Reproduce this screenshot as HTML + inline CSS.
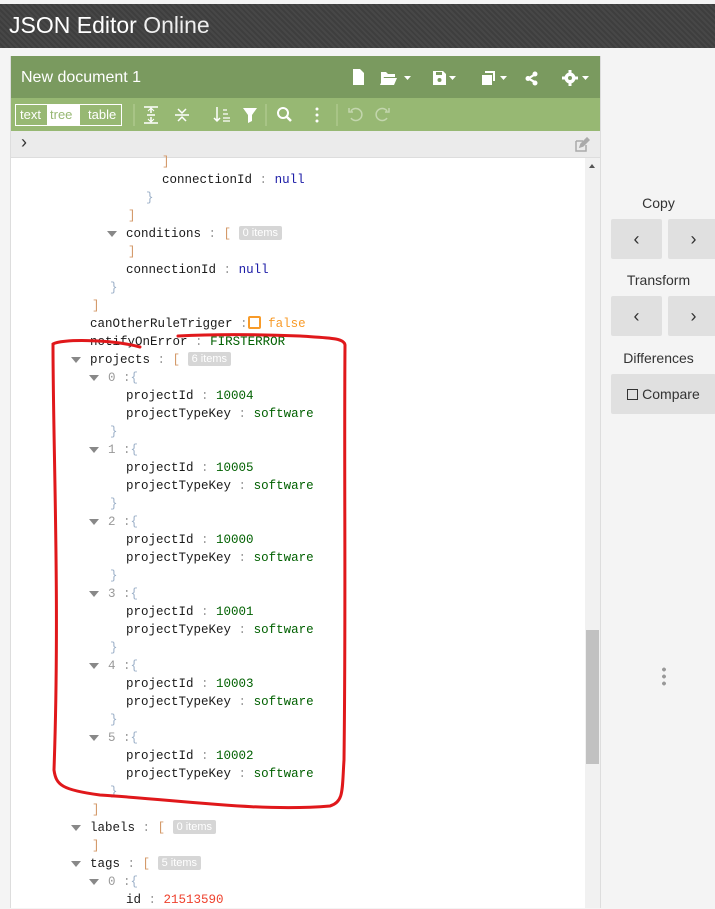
<!DOCTYPE html>
<html><head><meta charset="utf-8"><style>
*{margin:0;padding:0;box-sizing:border-box}
body{width:715px;height:908px;overflow:hidden;background:#f4f4f4;font-family:"Liberation Sans",sans-serif;position:relative}
#hdr{position:absolute;left:0;top:4px;width:715px;height:44px;background:repeating-linear-gradient(45deg,#474747 0 2px,#3e3e3e 2px 4px)}
#hdr span{position:absolute;left:9px;top:8px;font-size:23px;color:#fff}
#panel{position:absolute;left:10px;top:56px;width:589px;height:852px;background:#fff;border-left:1px solid #ddd}
#title{position:absolute;left:0;top:0;width:589px;height:42px;background:#7a9a5f;color:#fff;font-size:16px;padding:13px 10px}
#tb{position:absolute;left:0;top:42px;width:589px;height:33px;background:#97b873}
#nav{position:absolute;left:0;top:75px;width:589px;height:27px;background:#ebebeb;border-bottom:1px solid #ddd}
.r{position:absolute;font-family:"Liberation Mono",monospace;font-size:12.5px;color:#1a1a1a;white-space:pre;line-height:18px;height:18px;margin-top:1px}
.g{color:#999}.b{color:#9cb0c8}.o{color:#d49a6a}.n{color:#1a1aa6}.s{color:#006000}.num{color:#ee422e}
.idx{color:#999}
.badge{display:inline-block;background:#d6d6d6;color:#fff;font-family:"Liberation Sans",sans-serif;font-size:11px;line-height:14px;padding:0 4px;border-radius:2px;vertical-align:1px}
.tri{position:absolute;width:0;height:0;border-left:5px solid transparent;border-right:5px solid transparent;border-top:6px solid #888;margin-top:1px}
#side{position:absolute;left:600px;top:56px;width:115px;height:852px;background:#f4f4f4;border-left:1px solid #ddd}
.lbl{position:absolute;width:115px;text-align:center;font-size:14px;color:#333;left:0}
.btn{position:absolute;background:#e0e0e0;width:51px;height:40px;border-radius:2px;text-align:center;line-height:40px;font-size:18px;color:#333}
</style></head><body>
<div id="hdr"><span>JSON Editor <span style="position:static;font-weight:300;color:#eee">Online</span></span></div>
<div id="panel">
<div id="title">New document 1
<svg style="position:absolute;left:340px;top:12px" width="245" height="20" fill="#fff">
<path d="M2 1h7l4 4v12H2z"/>
<path d="M30 4h5l2 2h7v3h-11l-3 7z M32 10h14l-3 7H29z"/><path d="M53 8h7l-3.5 4z"/>
<path d="M82 3h10l3 3v11H82z" /><rect x="85" y="4" width="6" height="3" fill="#7a9a5f"/><circle cx="88.5" cy="12" r="2" fill="#7a9a5f"/><path d="M98 8h7l-3.5 4z"/>
<path d="M131 7h10v10h-10z M134 3h10v10h-2V5h-8z"/><path d="M149 8h7l-3.5 4z"/>
<circle cx="184" cy="6" r="2.5"/><circle cx="184" cy="15" r="2.5"/><circle cx="177" cy="10.5" r="2.5"/><path d="M177 10l7-4.5v1.5l-7 4.5z M177 11l7 4v-1.5l-7-4z" stroke="#fff"/>
<circle cx="219" cy="10" r="5.5"/><circle cx="219" cy="10" r="2" fill="#7a9a5f"/><path d="M217.5 2h3v3h-3zM217.5 15h3v3h-3zM211 8.5h3v3h-3zM224 8.5h3v3h-3z"/><path d="M231 8h7l-3.5 4z"/>
</svg></div>
<div id="tb">
<div style="position:absolute;left:4px;top:6px;width:107px;height:22px;border:1px solid #fff;font-size:13px;color:#fff;line-height:20px">
<span style="position:absolute;left:4px">text</span><span style="position:absolute;left:31px;width:33px;height:20px;background:#fff;color:#97b873;padding-left:3px">tree</span><span style="position:absolute;left:72px">table</span></div>
<svg style="position:absolute;left:120px;top:4px" width="280" height="26" stroke="#fff" fill="#fff">
<path d="M3 2v22M135 2v22M206 2v22" stroke="#b8d09a"/>
<path d="M13 5h14M13 21h14M16 13h8M20 7v4M20 15v4" stroke-width="1.5"/><path d="M17 9l3-3 3 3M17 17l3 3 3-3" fill="none"/>
<path d="M44 13h14M47 7l4 4 4-4M47 19l4-4 4 4" fill="none" stroke-width="1.5"/>
<path d="M86 5v14M83 16l3 3 3-3" fill="none" stroke-width="1.5"/><path d="M92 8h4M92 12h5M92 16h7M92 19h7" stroke-width="1.2"/>
<path d="M112 6h14l-5 7v6l-4 2v-8z" stroke="none"/>
<circle cx="152" cy="11" r="5" fill="none" stroke-width="2"/><path d="M156 15l4 4" stroke-width="2.5"/>
<circle cx="186" cy="7" r="1.5" stroke="none"/><circle cx="186" cy="13" r="1.5" stroke="none"/><circle cx="186" cy="19" r="1.5" stroke="none"/>
<path d="M220 9a6 6 0 1 1 0 7M218 6v4h4" fill="none" stroke="#c3d6ae" stroke-width="1.5"/>
<path d="M256 9a6 6 0 1 0 0 7M258 6v4h-4" fill="none" stroke="#c3d6ae" stroke-width="1.5"/>
</svg></div>
<div id="nav"><span style="position:absolute;left:10px;top:1px;font-size:18px;color:#333">›</span>
<svg style="position:absolute;left:563px;top:6px" width="16" height="16" fill="none" stroke="#aaa" stroke-width="1.5"><path d="M2 4h7M2 4v10h10V8"/><path d="M6 10l1-3 6-6 2 2-6 6z" fill="#aaa"/></svg></div>
<div style="position:absolute;left:574px;top:102px;width:15px;height:750px;background:#f1f1f1"></div>
<div style="position:absolute;left:575px;top:574px;width:13px;height:134px;background:#c1c1c1"></div>
<div style="position:absolute;left:578px;top:108px;border-left:3px solid transparent;border-right:3px solid transparent;border-bottom:4px solid #555"></div>
</div>
<div class="r o" style="left:162px;top:152px">]</div>
<div class="r" style="left:162px;top:170px">connectionId <span class="g">:</span> <span class="n">null</span></div>
<div class="r b" style="left:146px;top:188px">}</div>
<div class="r o" style="left:128px;top:206px">]</div>
<div class="tri" style="left:107px;top:230px"></div>
<div class="r" style="left:126px;top:224px">conditions <span class="g">:</span> <span class="o">[</span> <span class="badge">0 items</span></div>
<div class="r o" style="left:128px;top:242px">]</div>
<div class="r" style="left:126px;top:260px">connectionId <span class="g">:</span> <span class="n">null</span></div>
<div class="r b" style="left:110px;top:278px">}</div>
<div class="r o" style="left:92px;top:296px">]</div>
<div class="r" style="left:90px;top:314px">canOtherRuleTrigger <span class="g">:</span><span style="display:inline-block;width:13px;height:13px;border:2px solid #f89b29;border-radius:2px;vertical-align:-2px"></span> <span style="color:#f89b29">false</span></div>
<div class="r" style="left:90px;top:332px">notifyOnError <span class="g">:</span> <span class="s">FIRSTERROR</span></div>
<div class="tri" style="left:71px;top:356px"></div>
<div class="r" style="left:90px;top:350px">projects <span class="g">:</span> <span class="o">[</span> <span class="badge">6 items</span></div>

<div class="tri" style="left:89px;top:374px"></div><div class="r" style="left:108px;top:368px"><span class="idx">0</span> <span class="g">:</span><span class="b">{</span></div>
<div class="r" style="left:126px;top:386px">projectId <span class="g">:</span> <span class="s">10004</span></div>
<div class="r" style="left:126px;top:404px">projectTypeKey <span class="g">:</span> <span class="s">software</span></div>
<div class="r b" style="left:110px;top:422px">}</div>
<div class="tri" style="left:89px;top:446px"></div><div class="r" style="left:108px;top:440px"><span class="idx">1</span> <span class="g">:</span><span class="b">{</span></div>
<div class="r" style="left:126px;top:458px">projectId <span class="g">:</span> <span class="s">10005</span></div>
<div class="r" style="left:126px;top:476px">projectTypeKey <span class="g">:</span> <span class="s">software</span></div>
<div class="r b" style="left:110px;top:494px">}</div>
<div class="tri" style="left:89px;top:518px"></div><div class="r" style="left:108px;top:512px"><span class="idx">2</span> <span class="g">:</span><span class="b">{</span></div>
<div class="r" style="left:126px;top:530px">projectId <span class="g">:</span> <span class="s">10000</span></div>
<div class="r" style="left:126px;top:548px">projectTypeKey <span class="g">:</span> <span class="s">software</span></div>
<div class="r b" style="left:110px;top:566px">}</div>
<div class="tri" style="left:89px;top:590px"></div><div class="r" style="left:108px;top:584px"><span class="idx">3</span> <span class="g">:</span><span class="b">{</span></div>
<div class="r" style="left:126px;top:602px">projectId <span class="g">:</span> <span class="s">10001</span></div>
<div class="r" style="left:126px;top:620px">projectTypeKey <span class="g">:</span> <span class="s">software</span></div>
<div class="r b" style="left:110px;top:638px">}</div>
<div class="tri" style="left:89px;top:662px"></div><div class="r" style="left:108px;top:656px"><span class="idx">4</span> <span class="g">:</span><span class="b">{</span></div>
<div class="r" style="left:126px;top:674px">projectId <span class="g">:</span> <span class="s">10003</span></div>
<div class="r" style="left:126px;top:692px">projectTypeKey <span class="g">:</span> <span class="s">software</span></div>
<div class="r b" style="left:110px;top:710px">}</div>
<div class="tri" style="left:89px;top:734px"></div><div class="r" style="left:108px;top:728px"><span class="idx">5</span> <span class="g">:</span><span class="b">{</span></div>
<div class="r" style="left:126px;top:746px">projectId <span class="g">:</span> <span class="s">10002</span></div>
<div class="r" style="left:126px;top:764px">projectTypeKey <span class="g">:</span> <span class="s">software</span></div>
<div class="r b" style="left:110px;top:782px">}</div>
<div class="r o" style="left:92px;top:800px">]</div>
<div class="tri" style="left:71px;top:824px"></div>
<div class="r" style="left:90px;top:818px">labels <span class="g">:</span> <span class="o">[</span> <span class="badge">0 items</span></div>
<div class="r o" style="left:92px;top:836px">]</div>
<div class="tri" style="left:71px;top:860px"></div>
<div class="r" style="left:90px;top:854px">tags <span class="g">:</span> <span class="o">[</span> <span class="badge">5 items</span></div>
<div class="tri" style="left:89px;top:878px"></div><div class="r" style="left:108px;top:872px"><span class="idx">0</span> <span class="g">:</span><span class="b">{</span></div>
<div class="r" style="left:126px;top:890px">id <span class="g">:</span> <span class="num">21513590</span></div>

<svg style="position:absolute;left:0;top:0" width="715" height="908" fill="none" stroke="#e0181b" stroke-width="3" stroke-linecap="round">
<path d="M140 347C110 339 60 339 53 344C53 450 60 600 54 770C56 785 62 790 100 795C180 800 260 812 330 806C344 802 342 790 344 760C346 600 344 480 345 345C344 338 330 338 300 336C250 334 215 334 178 336"/>
</svg>

<div id="side">
<div class="lbl" style="top:139px">Copy</div>
<div class="btn" style="left:10px;top:163px">‹</div><div class="btn" style="left:67px;top:163px">›</div>
<div class="lbl" style="top:216px">Transform</div>
<div class="btn" style="left:10px;top:240px">‹</div><div class="btn" style="left:67px;top:240px">›</div>
<div class="lbl" style="top:294px">Differences</div>
<div class="btn" style="left:10px;top:318px;width:105px;font-size:14px"><span style="display:inline-block;width:11px;height:11px;border:1px solid #333;vertical-align:-1px"></span> Compare</div>
<div style="position:absolute;left:61px;top:610px;width:4px;height:20px;background:radial-gradient(circle,#999 1.8px,transparent 2px) 0 0/4px 7px"></div>
</div>
</body></html>
